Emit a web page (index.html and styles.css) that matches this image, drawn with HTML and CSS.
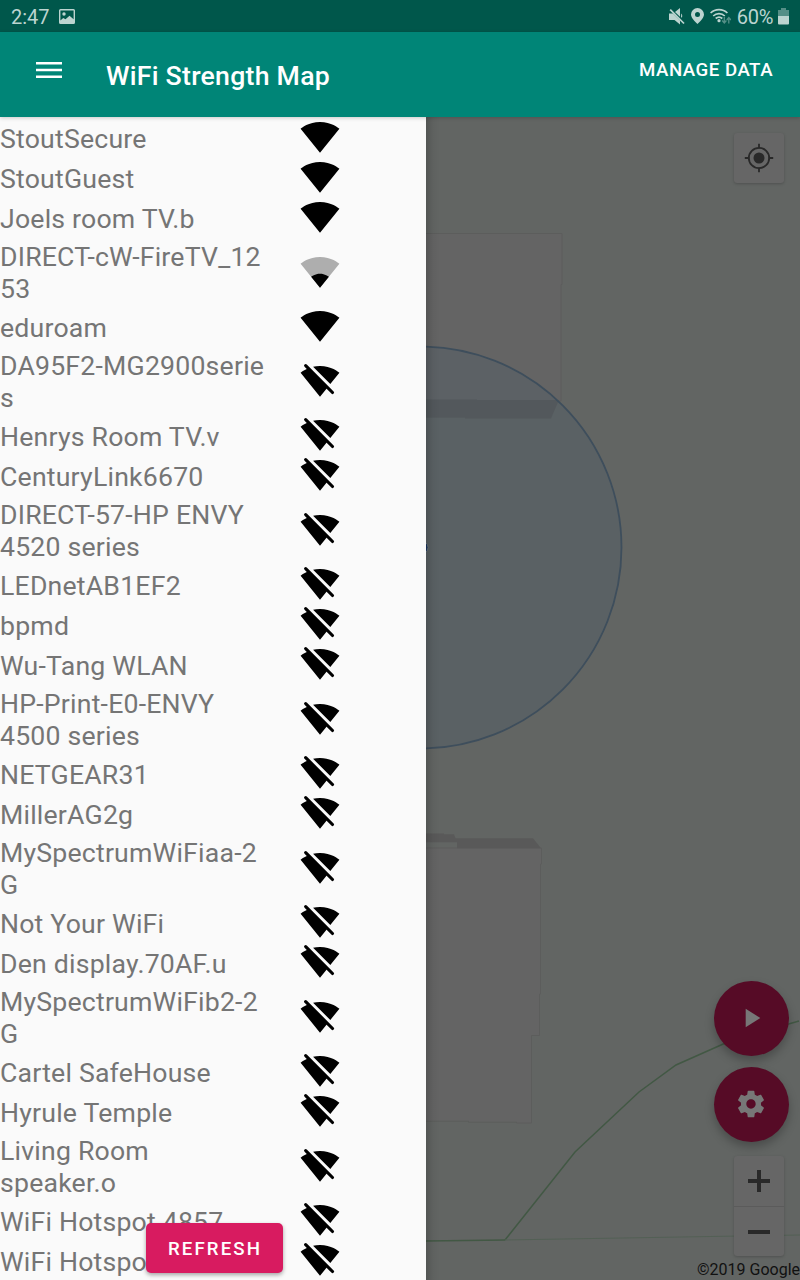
FILE: index.html
```html
<!DOCTYPE html>
<html lang="en">
<head>
<meta charset="utf-8">
<title>WiFi Strength Map</title>
<link rel="stylesheet" href="styles.css">
</head>
<body>
<svg class="defs" width="0" height="0">
  <symbol id="full" viewBox="0 0 24 24"><path d="M12.01 21.49L23.64 7c-.45-.34-4.93-4-11.64-4C5.28 3 .81 6.66.36 7l11.63 14.49.01.01.01-.01z"/></symbol>
  <symbol id="low" viewBox="0 0 24 24"><path fill-opacity=".3" d="M12.01 21.49L23.64 7c-.45-.34-4.93-4-11.64-4C5.28 3 .81 6.66.36 7l11.63 14.49.01.01.01-.01z"/><path d="M6.67 14.86L12 21.49v.01l.01-.01 5.33-6.63C17.06 14.65 15.03 13 12 13s-5.06 1.65-5.33 1.86z"/></symbol>
  <symbol id="off" viewBox="0 0 24 24"><path d="M23.640 7c-.45-.34-4.930-4-11.640-4-1.500 0-2.890.190-4.150.480L18.180 13.800 23.640 7zM4.050 4.780C1.910 5.760.590 6.820.360 7L12 21.500l3.900-4.870.7-.7L4.700 4.100z"/><path d="M3.400 2.800l16.100 16.100" fill="none" stroke="#000" stroke-width="1.900" stroke-linecap="round"/></symbol>
</svg>
<header class="status">
  <span class="clock">2:47</span>
  <svg class="photo" width="17" height="16" viewBox="0 0 17 16"><path fill-rule="evenodd" d="M1.500 0h13A1.500 1.500 0 0 1 16 1.500v12A1.500 1.500 0 0 1 14.500 15h-13A1.500 1.500 0 0 1 0 13.500v-12A1.500 1.500 0 0 1 1.500 0zM1.400 1.400v10l2.800-2.400 2.300 1.200 4-3.500 4.100 3.500V1.400z"/><circle cx="5" cy="5" r="1.700"/></svg>
  <span class="spacer"></span>
  <svg class="mute" width="16" height="17" viewBox="0 0 16 17"><path d="M0 5.500h4l7 7v4L5.500 12H0zM6 4l5-4v8.800zM12.300 5.500c1 .8 1.200 2.500.6 4.300l-.9-.9z"/><path d="M1.200 1.700L15 15.500" fill="none" stroke="currentColor" stroke-width="1.700"/></svg>
  <svg class="pin" width="13" height="16" viewBox="0 0 13 16"><path fill-rule="evenodd" d="M6.500 0A6.500 6.500 0 0 0 0 6.500C0 10.500 6.500 16 6.500 16S13 10.500 13 6.500A6.500 6.500 0 0 0 6.500 0zm0 4a2.500 2.500 0 1 1 0 5 2.500 2.500 0 0 1 0-5z"/></svg>
  <svg class="wifi" width="21" height="17" viewBox="0 0 21 17"><g fill="none" stroke="currentColor" stroke-width="1.700"><path d="M.6 5a12 12 0 0 1 16.800 0M3.200 8a8.500 8.500 0 0 1 11.600 0M5.700 10.500a5 5 0 0 1 6.600 0"/></g><circle cx="9" cy="12.700" r="1.600"/><g fill="none" stroke="currentColor" opacity=".45" stroke-width="1.300"><path d="M14.300 9v6M12.200 12.500l2.100 2.500 2.100-2.500M18.800 15.500v-6M16.700 12l2.100-2.500 2.100 2.500"/></g></svg>
  <span class="percent">60%</span>
  <svg class="battery" width="11" height="17" viewBox="0 0 11 17"><path opacity=".45" d="M3 0h5v2h3v6H0V2h3z"/><path d="M0 8h11v7.500q0 1-1 1H1q-1 0-1-1z"/></svg>
</header>
<nav class="appbar">
  <svg class="menu" width="26" height="18" viewBox="0 0 26 18"><path d="M0 1h26v2.500H0zM0 7.800h26v2.500H0zM0 14.500h26V17H0z"/></svg>
  <h1 class="title">WiFi Strength Map</h1>
  <span class="manage">MANAGE DATA</span>
</nav>
<main class="content">
  <section class="mapview">
    <svg class="map" width="374" height="1163" viewBox="426 117 374 1163">
      <path class="building" d="M420 233.500h142v51h-1V401H420z"/>
      <path class="building" d="M420 848h121.500v16h-1v130h-1v41.500h-8V1123h-15v-.8h-48v-1H420z"/>
      <path class="wall" d="M420 833.500h24v.8h10l1.500 4H533l8 10h-84v-6h-37z"/>
      <path class="wall" d="M420 399.500h57v.5h82l-8 18.500H465v-.8h-45z"/>
      <circle class="range" cx="420.500" cy="547.500" r="201"/>
      <circle cx="421" cy="547.500" r="7" fill="#19345e" stroke="#68737a"/>
      <path class="trail" d="M420 1241l85-1"/>
      <path class="trail" d="M505 1240l70-88 64-60 37-27 54-24 69-20"/>
      <path class="trail thin" d="M505 1240l295-5"/>
    </svg>
    <button class="locate control" aria-label="My location"><svg width="30" height="30" viewBox="0 0 30 30"><g fill="none" stroke="#292929" stroke-width="1.800"><circle cx="15" cy="15" r="10.200"/><path d="M15 .8v4.500M15 24.700v4.500M.8 15h4.500M24.700 15h4.500"/></g><circle cx="15" cy="15" r="5.500" fill="#292929"/></svg></button>
    <div class="actions">
      <button class="fab" aria-label="Start"><svg class="play" width="32" height="32" viewBox="0 0 24 24"><path d="M8 5v14l11-7z"/></svg></button>
      <button class="fab" aria-label="Settings"><svg class="gear" width="32" height="32" viewBox="0 0 24 24"><path d="M19.430 12.980c.04-.32.070-.64.070-.98s-.03-.66-.07-.98l2.110-1.650c.19-.15.240-.42.120-.64l-2-3.460c-.12-.22-.39-.3-.61-.22l-2.490 1c-.52-.4-1.080-.73-1.690-.98l-.38-2.650C14.460 2.180 14.250 2 14 2h-4c-.25 0-.46.180-.49.420l-.38 2.650c-.61.250-1.170.590-1.690.980l-2.490-1c-.23-.09-.49 0-.61.220l-2 3.460c-.13.220-.07.490.120.640l2.110 1.650c-.04.320-.07.650-.07.980s.03.660.070.980l-2.110 1.650c-.19.150-.24.420-.12.640l2 3.460c.12.220.390.300.610.220l2.490-1c.52.400 1.080.730 1.690.980l.38 2.650c.03.240.240.420.490.420h4c.25 0 .46-.18.490-.42l.38-2.650c.61-.25 1.170-.59 1.690-.98l2.490 1c.23.090.490 0 .61-.22l2-3.460c.12-.22.070-.49-.12-.64l-2.110-1.650zM12 15.500c-1.930 0-3.500-1.570-3.500-3.500s1.570-3.500 3.500-3.500 3.500 1.570 3.500 3.500-1.570 3.500-3.500 3.500z"/></svg></button>
      <div class="zoom control">
        <button aria-label="Zoom in"><svg width="22" height="22" viewBox="0 0 22 22"><path d="M9 0h4v9h9v4h-9v9H9v-9H0V9h9z"/></svg></button>
        <button aria-label="Zoom out"><svg width="22" height="22" viewBox="0 0 22 22"><path d="M0 9h22v4H0z"/></svg></button>
      </div>
    </div>
    <span class="copyright">©2019 Google</span>
  </section>
  <aside class="drawer">
    <ul class="networks">
      <li><span>StoutSecure</span><svg><use href="#full"/></svg></li>
      <li><span>StoutGuest</span><svg><use href="#full"/></svg></li>
      <li><span>Joels room TV.b</span><svg><use href="#full"/></svg></li>
      <li class="double"><span>DIRECT-cW-FireTV_12<br>53</span><svg><use href="#low"/></svg></li>
      <li><span>eduroam</span><svg><use href="#full"/></svg></li>
      <li class="double"><span>DA95F2-MG2900serie<br>s</span><svg><use href="#off"/></svg></li>
      <li><span>Henrys Room TV.v</span><svg><use href="#off"/></svg></li>
      <li><span>CenturyLink6670</span><svg><use href="#off"/></svg></li>
      <li class="double"><span>DIRECT-57-HP ENVY<br>4520 series</span><svg><use href="#off"/></svg></li>
      <li><span>LEDnetAB1EF2</span><svg><use href="#off"/></svg></li>
      <li><span>bpmd</span><svg><use href="#off"/></svg></li>
      <li><span>Wu-Tang WLAN</span><svg><use href="#off"/></svg></li>
      <li class="double"><span>HP-Print-E0-ENVY<br>4500 series</span><svg><use href="#off"/></svg></li>
      <li><span>NETGEAR31</span><svg><use href="#off"/></svg></li>
      <li><span>MillerAG2g</span><svg><use href="#off"/></svg></li>
      <li class="double"><span>MySpectrumWiFiaa-2<br>G</span><svg><use href="#off"/></svg></li>
      <li><span>Not Your WiFi</span><svg><use href="#off"/></svg></li>
      <li><span>Den display.70AF.u</span><svg><use href="#off"/></svg></li>
      <li class="double"><span>MySpectrumWiFib2-2<br>G</span><svg><use href="#off"/></svg></li>
      <li><span>Cartel SafeHouse</span><svg><use href="#off"/></svg></li>
      <li><span>Hyrule Temple</span><svg><use href="#off"/></svg></li>
      <li class="double"><span>Living Room<br>speaker.o</span><svg><use href="#off"/></svg></li>
      <li><span>WiFi Hotspot 4857</span><svg><use href="#off"/></svg></li>
      <li><span>WiFi Hotspot</span><svg><use href="#off"/></svg></li>
    </ul>
    <button class="refresh">REFRESH</button>
  </aside>
</main>
</body>
</html>
```
FILE: styles.css
```css
* { box-sizing: border-box; }
body {
  margin: 0;
  width: 800px;
  height: 1280px;
  overflow: hidden;
  display: flex;
  flex-direction: column;
  font-family: Roboto, "Liberation Sans", sans-serif;
}
button { border: 0; padding: 0; font-family: inherit; }
.defs { position: absolute; }

.status {
  height: 32px;
  flex: none;
  display: flex;
  align-items: center;
  padding: 2px 11px 0 11px;
  background: #00574b;
  color: #bcd4d0;
  fill: currentColor;
  font-size: 20px;
}
.photo { margin-left: 9px; }
.spacer { flex: 1; }
.mute { margin-bottom: 2px; }
.pin { margin-left: 6px; margin-bottom: 2px; }
.wifi { margin-left: 6px; margin-bottom: 1px; }
.percent { margin-left: 6px; letter-spacing: -0.3px; }
.battery { margin-left: 5px; margin-bottom: 2px; }

.appbar {
  height: 85px;
  flex: none;
  display: flex;
  align-items: flex-start;
  padding: 0 27px 0 36px;
  background: #008577;
  color: #fff;
  fill: #fff;
  position: relative;
  z-index: 2;
  box-shadow: 0 1px 4px rgba(0, 0, 0, .2);
}
.menu { margin-top: 29px; }
.title { margin: 28px 0 0 44px; font-size: 26.67px; line-height: 32px; font-weight: 500; letter-spacing: .25px; flex: 1; }
.manage { margin-top: 26px; font-size: 18.67px; line-height: 24px; font-weight: 500; letter-spacing: .5px; }

.content { flex: 1; min-height: 0; display: flex; flex-direction: row-reverse; }
.drawer {
  width: 426px;
  position: relative;
  background: #fafafa;
  overflow: hidden;
}
.networks { list-style: none; margin: 0; padding: 0; }
.networks li {
  height: 40px;
  display: grid;
  grid-template-columns: 300px 40px;
  align-items: center;
  color: #757575;
  font-size: 26.67px;
  line-height: 32px;
  letter-spacing: .2px;
  white-space: nowrap;
}
.networks span { padding-top: 3px; }
.networks svg { width: 40px; height: 40px; fill: #000; }
.networks .double { height: 69px; }
.networks .double span { padding-top: 3px; }
.refresh {
  position: absolute;
  left: 146px;
  bottom: 7px;
  width: 137px;
  height: 50px;
  border-radius: 5px;
  background: #d81b60;
  color: #fff;
  font-size: 18.67px;
  font-weight: 500;
  letter-spacing: 2.1px;
  padding: 1px 0 0 1px;
  box-shadow: 0 2px 4px rgba(0, 0, 0, .35);
}

.mapview { width: 374px; position: relative; overflow: hidden; background: #626563; }
.mapview::after {
  content: "";
  position: absolute;
  inset: 0 auto 0 0;
  width: 14px;
  background: linear-gradient(90deg, rgba(0, 0, 0, .16), rgba(0, 0, 0, .04) 50%, transparent);
}
.map { display: block; }
.building { fill: #646464; stroke: #5c5d5c; }
.wall { fill: #595959; }
.range { fill: rgba(66, 88, 105, .25); stroke: #3e4e5c; stroke-width: 1.800; }
.trail { fill: none; stroke: #425844; stroke-width: 1.500; }
.thin { stroke: #536055; stroke-width: 1; }
.control { background: #666; border-radius: 3px; box-shadow: 0 1px 3px rgba(0, 0, 0, .2); fill: #292929; }
.locate {
  position: absolute;
  top: 16px;
  right: 16px;
  width: 50px;
  height: 50px;
  display: grid;
  place-items: center;
}
.actions {
  position: absolute;
  right: 11px;
  bottom: 24px;
  display: flex;
  flex-direction: column;
  align-items: flex-end;
  gap: 11px;
}
.fab {
  width: 75px;
  height: 75px;
  border-radius: 50%;
  display: grid;
  place-items: center;
  background: #560b26;
  fill: #777;
  box-shadow: 0 5px 10px rgba(0, 0, 0, .25);
}
.play { margin: 0 2px 2px 0; }
.gear { margin-right: 2px; margin-bottom: 2px; }
.zoom { width: 50px; height: 100px; margin: 3px 5px 0 0; display: grid; grid-template-rows: 50px 50px; }
.zoom button { background: none; display: grid; place-items: center; }
.zoom button + button { border-top: 1px solid #5b5b5b; }
.copyright {
  position: absolute;
  right: 0;
  bottom: 0;
  font-size: 16px;
  line-height: 20px;
  color: #111;
}
```
